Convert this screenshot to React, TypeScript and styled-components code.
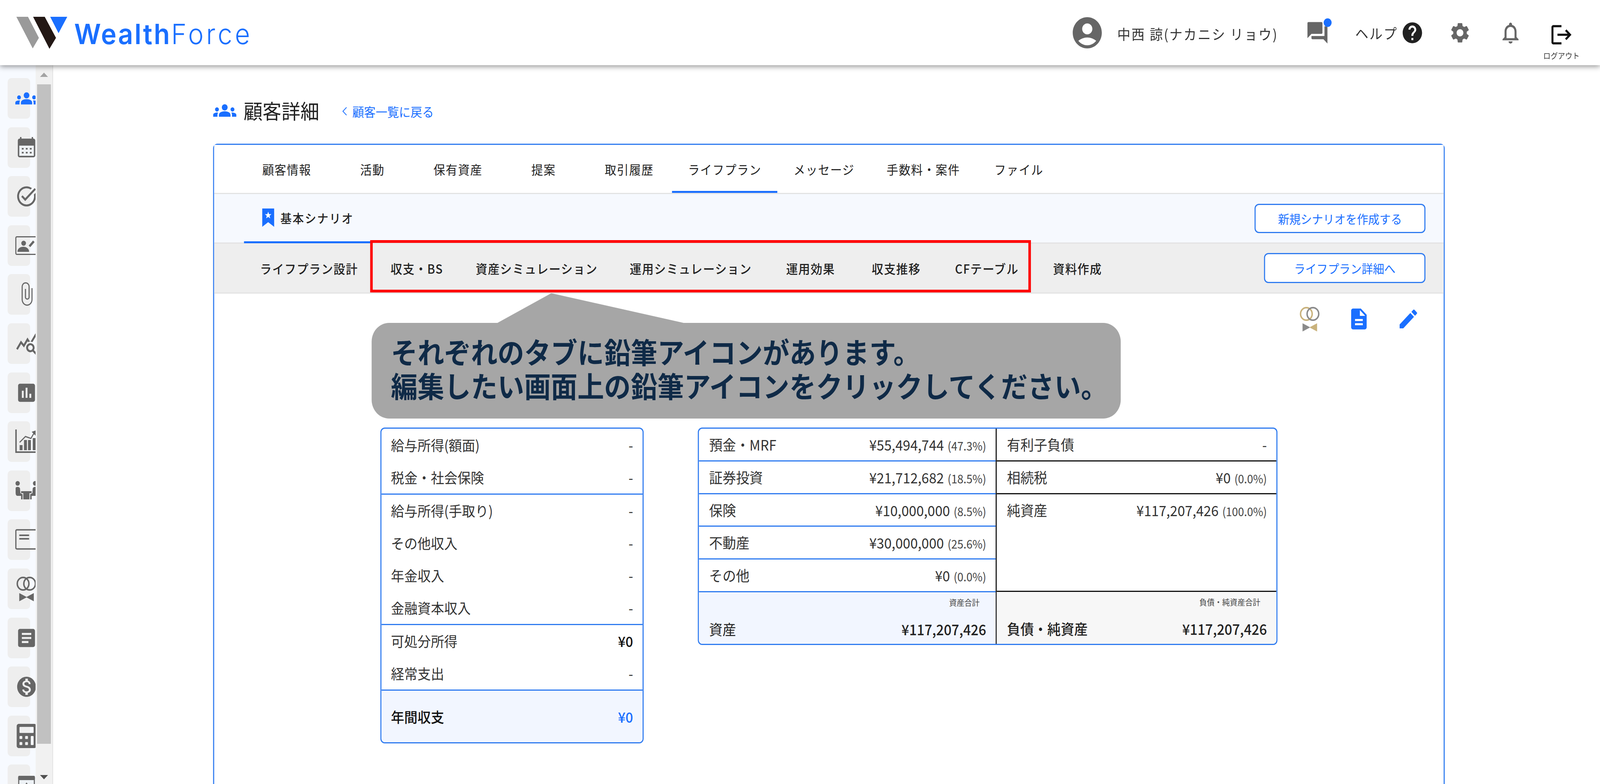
import React from 'react';
import styled, { createGlobalStyle } from 'styled-components';
import {
  MdAccountCircle,
  MdArticle,
  MdAssessment,
  MdDescription,
  MdEdit,
  MdGroups,
  MdHelp,
  MdLogout,
  MdMonetizationOn,
  MdNotificationsNone,
  MdOutlineTaskAlt,
  MdQueryStats,
  MdQuestionAnswer,
  MdSettings,
} from 'react-icons/md';
import { FaCalculator } from 'react-icons/fa';

const BLUE = '#1a6fff';
const LINE = '#2f7bf0';
const ICON = '#666666';
const DESIGN_WIDTH = 4400;

const GlobalStyle = createGlobalStyle`
  html, body {
    margin: 0;
    padding: 0;
    overflow: hidden;
    background: #fff;
  }
  body {
    font-family: "Noto Sans CJK JP", "Noto Sans", sans-serif;
    color: #222;
  }
`;

const Viewport = styled.div`
  width: 100vw;
  height: 2008px;
  overflow: hidden;
`;

const Page = styled.div`
  width: ${DESIGN_WIDTH}px;
  height: 2008px;
  overflow: hidden;
  transform-origin: 0 0;
  display: flex;
  flex-direction: column;
`;

/* header */
const Header = styled.header`
  position: relative;
  z-index: 2;
  flex: none;
  height: 167px;
  display: flex;
  align-items: center;
  padding: 0 56px 0 45px;
  background: #fff;
  box-shadow: 0 3px 14px rgba(0, 0, 0, 0.45);
`;

const Logo = styled.div`
  display: flex;
  align-items: center;
  gap: 18px;
`;

const LogoText = styled.span`
  font-family: Inter, sans-serif;
  font-size: 72px;
  line-height: 80px;
  color: ${BLUE};
  margin-top: 6px;

  b {
    font-weight: 600;
    letter-spacing: 3.8px;
  }
  i {
    font-style: normal;
    font-weight: 300;
    letter-spacing: 7px;
  }
`;

const HeaderRight = styled.div`
  margin-left: auto;
  display: flex;
  align-items: center;
  color: ${ICON};
`;

const UserName = styled.span`
  margin: 4px 0 0 35px;
  font-size: 36px;
  letter-spacing: 3px;
  white-space: pre;
  color: #333;
`;

const ChatButton = styled.div`
  position: relative;
  display: flex;
  margin-left: 75px;
`;

const ChatDot = styled.span`
  position: absolute;
  left: 50px;
  top: -4px;
  width: 22px;
  height: 22px;
  border-radius: 50%;
  background: ${BLUE};
`;

const HelpLink = styled.div`
  display: flex;
  align-items: center;
  gap: 8px;
  margin-left: 71px;
  font-size: 36px;
  letter-spacing: 3px;
  color: #333;
  svg {
    color: #212121;
  }
`;

const HeaderIcon = styled.div<{ $gap: number }>`
  display: flex;
  margin-left: ${(p) => p.$gap}px;
`;

const LogoutButton = styled.div`
  align-self: flex-start;
  margin: 43px 0 0 57px;
  display: flex;
  flex-direction: column;
  align-items: center;
  color: #111;
  font-size: 20px;
  line-height: 24px;
  span {
    margin-top: 9px;
    color: #333;
  }
`;

/* sidebar */
const Body = styled.div`
  flex: 1;
  min-height: 0;
  display: flex;
`;

const Sidebar = styled.nav`
  flex: none;
  width: 98px;
  overflow: hidden;
  padding: 33px 0 0 21px;
  box-sizing: border-box;
  background: #f7faff;
  display: flex;
  flex-direction: column;
  gap: 21.6px;
`;

const Tile = styled.div<{ $active?: boolean }>`
  flex: none;
  width: 62px;
  height: 104px;
  border-radius: 10px;
  background: #eeeeee;
  display: flex;
  align-items: center;
  padding-left: 21px;
  box-sizing: border-box;
  color: ${(p) => (p.$active ? BLUE : ICON)};
  svg {
    flex: none;
  }
`;

const ScrollTrack = styled.div`
  flex: none;
  width: 48px;
  box-sizing: border-box;
  padding: 0 4px;
  background: #f1f1f1;
  border-right: 2px solid #e2e2e2;
  display: flex;
  flex-direction: column;
  align-items: stretch;
`;

const ScrollArrow = styled.div<{ $down?: boolean }>`
  flex: none;
  height: ${(p) => (p.$down ? 103 : 49)}px;
  display: flex;
  align-items: ${(p) => (p.$down ? 'flex-end' : 'center')};
  justify-content: center;
  padding-bottom: ${(p) => (p.$down ? 12 : 0)}px;
  box-sizing: border-box;
  &::before {
    content: '';
    border-left: 11px solid transparent;
    border-right: 11px solid transparent;
    ${(p) =>
      p.$down
        ? 'border-top: 11px solid #505050;'
        : 'border-bottom: 11px solid #a3a3a3;'}
  }
`;

const ScrollThumb = styled.div`
  flex: 1;
  background: #c1c1c1;
`;

/* main */
const Main = styled.main`
  flex: 1;
  min-width: 0;
  padding: 80px 427px 0 440px;
  background: #fff;
`;

const TitleRow = styled.div`
  height: 72px;
  margin-bottom: 49px;
  display: flex;
  align-items: center;
`;

const TitleIcon = styled.span`
  display: flex;
  color: ${BLUE};
`;

const Title = styled.h1`
  margin: 0 0 0 20px;
  font-size: 52px;
  font-weight: 400;
  color: #222;
  line-height: 72px;
`;

const BackLink = styled.a`
  margin: 4px 0 0 62px;
  display: flex;
  align-items: center;
  gap: 14px;
  font-size: 32px;
  color: ${BLUE};
`;

const Card = styled.section`
  position: relative;
  min-height: 1700px;
  border: 3px solid ${LINE};
  border-radius: 12px;
  background: #fff;
`;

const TabRow = styled.div<{ $bg: string; $height: number }>`
  height: ${(p) => p.$height}px;
  box-sizing: border-box;
  display: flex;
  padding: 0 50px 0 82px;
  background: ${(p) => p.$bg};
  border-bottom: 3px solid #e3e3e3;
`;

const Tab = styled.div<{ $active?: boolean; $medium?: boolean }>`
  position: relative;
  min-width: 235.4px;
  padding: 0 44px;
  box-sizing: border-box;
  display: flex;
  align-items: center;
  justify-content: center;
  font-size: 32px;
  font-weight: ${(p) => (p.$medium ? 500 : 400)};
  letter-spacing: 1.7px;
  white-space: nowrap;
  color: #222;
  box-shadow: ${(p) => (p.$active ? `inset 0 -5px 0 ${BLUE}` : 'none')};
`;

const ScenarioTab = styled.div`
  width: 348px;
  padding-left: 50px;
  box-sizing: border-box;
  display: flex;
  align-items: center;
  gap: 17px;
  font-size: 31px;
  font-weight: 500;
  letter-spacing: 2.7px;
  border-bottom: 5px solid ${BLUE};
  margin-bottom: -2px;
`;

const RowAction = styled.div<{ $width: number; $height: number }>`
  margin: auto 0 auto auto;
  width: ${(p) => p.$width}px;
  height: ${(p) => p.$height}px;
  box-sizing: border-box;
  display: flex;
  align-items: center;
  justify-content: center;
  border: 3px solid ${LINE};
  border-radius: 12px;
  background: #fff;
  color: ${BLUE};
  font-size: 31px;
`;

const CardBody = styled.div`
  padding: 33px 65px 0 457px;
`;

const ToolRow = styled.div`
  height: 64px;
  margin-bottom: 246px;
  display: flex;
  justify-content: flex-end;
  gap: 72px;
  color: ${BLUE};
`;

const Tables = styled.div`
  display: flex;
  align-items: flex-start;
  gap: 149px;
`;

const IncomeTable = styled.div`
  width: 724px;
  box-sizing: border-box;
  border: 3px solid ${LINE};
  border-radius: 12px;
  overflow: hidden;
`;

const IncomeSection = styled.div`
  border-bottom: 3px solid ${LINE};
`;

const IncomeRow = styled.div`
  height: 82.75px;
  padding: 0 26px;
  box-sizing: border-box;
  display: flex;
  align-items: center;
  justify-content: space-between;
  font-size: 36.6px;
  color: #333;
`;

const IncomeValue = styled.span<{ $strong?: boolean }>`
  font-weight: ${(p) => (p.$strong ? 500 : 400)};
  color: ${(p) => (p.$strong ? '#111' : '#333')};
`;

const IncomeTotal = styled.div`
  height: 132px;
  padding: 0 26px;
  box-sizing: border-box;
  display: flex;
  align-items: center;
  justify-content: space-between;
  background: #f2f6ff;
  font-size: 36.6px;
  font-weight: 500;
  color: #111;

  span:last-child {
    color: ${BLUE};
  }
`;

const BalanceTable = styled.div`
  width: 1594px;
  box-sizing: border-box;
  border: 3px solid ${LINE};
  border-radius: 12px;
  overflow: hidden;
  display: grid;
  grid-template-columns: 819px 1fr;
`;

const BalanceColumn = styled.div<{ $line: string; $divider?: boolean }>`
  display: flex;
  flex-direction: column;
  height: 551px;
  ${(p) => (p.$divider ? 'border-right: 3px solid #111;' : '')}
  --row-line: ${(p) => p.$line};
`;

const BalanceRow = styled.div<{ $grow?: boolean }>`
  flex: ${(p) => (p.$grow ? 1 : 'none')};
  height: ${(p) => (p.$grow ? 'auto' : '83.75px')};
  box-sizing: border-box;
  padding: 17px 26px 0 28px;
  display: flex;
  justify-content: space-between;
  font-size: 37px;
  line-height: 46px;
  color: #333;
  border-bottom: 3px solid var(--row-line);
`;

const Percent = styled.small`
  margin-left: 10px;
  font-size: 30px;
  color: #444;
`;

const BalanceTotal = styled.div<{ $bg: string }>`
  flex: none;
  height: 133.5px;
  box-sizing: border-box;
  padding: 11px 26px 16px 28px;
  display: flex;
  flex-direction: column;
  justify-content: space-between;
  background: ${(p) => p.$bg};
`;

const TotalCaption = styled.div`
  align-self: flex-end;
  padding-right: 18px;
  font-size: 21px;
  line-height: 28px;
  color: #444;
`;

const TotalLine = styled.div<{ $strong?: boolean }>`
  display: flex;
  justify-content: space-between;
  font-size: 37px;
  line-height: 46px;
  color: #222;
  font-weight: ${(p) => (p.$strong ? 500 : 400)};

  span:last-child {
    font-weight: 500;
  }
`;

/* annotation drawn on top of the screenshot */
const RedFrame = styled.div`
  position: absolute;
  left: 429px;
  top: 244px;
  width: 1817px;
  height: 134px;
  box-sizing: border-box;
  border: 7px solid #ff0000;
`;

const Callout = styled.div`
  position: absolute;
  left: 433px;
  top: 456px;
  width: 2060px;
  height: 245px;
  box-sizing: border-box;
  padding: 29px 0 0 53px;
  border-radius: 48px;
  background: #a6a6a6;
  color: #0f2a47;
  font-size: 73.3px;
  font-weight: 700;
  line-height: 87px;
  white-space: pre;
`;

const CalloutTail = styled.div`
  position: absolute;
  left: 346px;
  top: -76px;
  width: 512px;
  height: 76px;
  background: #a6a6a6;
  clip-path: polygon(0 100%, 148px 0, 100% 100%);
`;

/* drawings */
const LogoMark = () => (
  <svg width="141" height="82" viewBox="0 0 141 82">
    <polygon points="0,0 32,0 62,54 45,81" fill="#9a9a9a" />
    <polygon points="46,0 78,0 109,54 91,82" fill="#231815" />
    <polygon points="93,0 140,0 116,42" fill={BLUE} />
  </svg>
);

const Bookmark = () => (
  <svg width="33" height="47" viewBox="0 0 33 47">
    <path d="M0 0H33V47L16.5 35L0 47Z" fill={BLUE} />
    <polygon
      points="16.5,8 18.8,14.4 25.5,14.6 20.2,18.7 22.1,25.2 16.5,21.4 10.9,25.2 12.8,18.7 7.5,14.6 14.2,14.4"
      fill="#fff"
    />
  </svg>
);

const Chevron = () => (
  <svg width="15" height="22" viewBox="0 0 15 22" fill="none" stroke={BLUE} strokeWidth="2">
    <path d="M13 1L3 11L13 21" />
  </svg>
);

const CalendarIcon = () => (
  <svg width="62" height="62" viewBox="0 0 62 62" fill={ICON}>
    <rect x="13" y="4" width="4" height="8" />
    <rect x="45" y="4" width="4" height="8" />
    <rect x="7" y="8" width="48" height="48" rx="5" />
    <rect x="11" y="26" width="40" height="26" fill="#eef2f6" />
    {[18, 29, 40].map((x) =>
      [32, 42].map((y) => <rect key={`${x}-${y}`} x={x} y={y} width="5" height="4" />),
    )}
  </svg>
);

const ProfileEditIcon = () => (
  <svg width="62" height="62" viewBox="0 0 62 62" fill={ICON}>
    <rect x="1.5" y="8.5" width="62" height="45" rx="3" fill="none" stroke={ICON} strokeWidth="3" />
    <circle cx="23" cy="25" r="6.5" />
    <path d="M6 47C6 38 14 34 22 34C30 34 38 38 38 47Z" />
    <path d="M39 33L51 20" stroke={ICON} strokeWidth="6" />
  </svg>
);

const ClipIcon = () => (
  <svg width="62" height="62" viewBox="0 0 62 62" fill="none" stroke={ICON} strokeWidth="3">
    <path d="M46 15V44A13.5 14.5 0 0 1 19 44V11A9.5 9.5 0 0 1 38 11V38A5 5 0 0 1 28 38V17" />
  </svg>
);

const GrowthIcon = () => (
  <svg width="62" height="62" viewBox="0 0 62 62" fill={ICON}>
    <path d="M2 -1V58H62" fill="none" stroke={ICON} strokeWidth="4" />
    {[
      [12, 40],
      [24, 27],
      [35, 27],
      [48, 22],
    ].map(([x, y]) => (
      <rect key={x} x={x} y={y} width="8" height={53 - y} />
    ))}
    <path d="M12 33L28 18L43 23L53 7" fill="none" stroke={ICON} strokeWidth="3" />
    <polygon points="45,6 58,2 56,16" />
  </svg>
);

const MeetingIcon = () => (
  <svg width="62" height="62" viewBox="0 0 62 62" fill={ICON}>
    <circle cx="6.5" cy="12" r="6" />
    <circle cx="54.5" cy="12" r="6" />
    <path d="M1 24C1 20 12 20 13 25L14 37L20 40V53H16V44H6C2 44 1 40 1 36Z" />
    <path d="M60 24C60 20 49 20 48 25L47 37L41 40V53H45V44H55C59 44 60 40 60 36Z" />
    <rect x="16" y="32" width="29" height="5" />
    <rect x="22" y="37" width="17" height="16" />
  </svg>
);

const NoteCardIcon = () => (
  <svg width="62" height="62" viewBox="0 0 62 62" fill={ICON}>
    <rect x="1.5" y="6" width="62" height="49" rx="3" fill="none" stroke={ICON} strokeWidth="3.5" />
    <rect x="11" y="18" width="27" height="4" />
    <rect x="11" y="27" width="27" height="4" />
  </svg>
);

const PresentIcon = () => (
  <svg width="62" height="62" viewBox="0 0 62 62" fill={ICON}>
    <rect x="9.5" y="10" width="43" height="44" rx="3" fill="#eef2f6" stroke={ICON} strokeWidth="3" />
    <rect x="8" y="8" width="46" height="11" rx="3" />
    <polygon points="31,25 37,33 25,33" />
  </svg>
);

const RingsIcon = ({ left = ICON, right = ICON }: { left?: string; right?: string }) => (
  <svg width="62" height="64" viewBox="0 0 62 64" fill="none" strokeWidth="4">
    <circle cx="21.5" cy="19" r="16" stroke={left} />
    <circle cx="39.5" cy="19" r="16" stroke={right} />
    <polygon points="11,43 31,53 31,54 11,64" fill={right} />
    <polygon points="51,43 31,53 31,54 51,64" fill={left} />
  </svg>
);

const sideIcons = [
  <MdGroups key="groups" size={62} />,
  <CalendarIcon key="calendar" />,
  <MdOutlineTaskAlt key="task" size={62} />,
  <ProfileEditIcon key="profile" />,
  <ClipIcon key="clip" />,
  <MdQueryStats key="stats" size={62} />,
  <MdAssessment key="assessment" size={62} />,
  <GrowthIcon key="growth" />,
  <MeetingIcon key="meeting" />,
  <NoteCardIcon key="note" />,
  <RingsIcon key="rings" />,
  <MdArticle key="article" size={62} />,
  <MdMonetizationOn key="money" size={62} />,
  <FaCalculator key="calc" size={62} />,
  <PresentIcon key="present" />,
];

const mainTabs = ['顧客情報', '活動', '保有資産', '提案', '取引履歴', 'ライフプラン', 'メッセージ', '手数料・案件', 'ファイル'];
const subTabs = ['ライフプラン設計', '収支・BS', '資産シミュレーション', '運用シミュレーション', '運用効果', '収支推移', 'CFテーブル', '資料作成'];

const incomeSections: [string, string][][] = [
  [
    ['給与所得(額面)', '-'],
    ['税金・社会保険', '-'],
  ],
  [
    ['給与所得(手取り)', '-'],
    ['その他収入', '-'],
    ['年金収入', '-'],
    ['金融資本収入', '-'],
  ],
  [
    ['可処分所得', '¥0'],
    ['経常支出', '-'],
  ],
];

const assets = [
  ['預金・MRF', '¥55,494,744', '(47.3%)'],
  ['証券投資', '¥21,712,682', '(18.5%)'],
  ['保険', '¥10,000,000', '(8.5%)'],
  ['不動産', '¥30,000,000', '(25.6%)'],
  ['その他', '¥0', '(0.0%)'],
];

export default function App() {
  // the browser window can be narrower than the 4400px design, so squeeze to fit
  const fit = window.innerWidth / DESIGN_WIDTH;

  return (
    <Viewport>
      <GlobalStyle />
      <Page style={{ transform: `scaleX(${fit})` }}>
        <Header>
          <Logo>
            <LogoMark />
            <LogoText>
              <b>Wealth</b>
              <i>Force</i>
            </LogoText>
          </Logo>
          <HeaderRight>
            <MdAccountCircle size={96} />
            <UserName>中西 諒(ナカニシ リョウ)</UserName>
            <ChatButton>
              <MdQuestionAnswer size={66} />
              <ChatDot />
            </ChatButton>
            <HelpLink>
              ヘルプ
              <MdHelp size={64} />
            </HelpLink>
            <HeaderIcon $gap={68}>
              <MdSettings size={62} />
            </HeaderIcon>
            <HeaderIcon $gap={75}>
              <MdNotificationsNone size={66} />
            </HeaderIcon>
            <LogoutButton>
              <MdLogout size={66} />
              <span>ログアウト</span>
            </LogoutButton>
          </HeaderRight>
        </Header>
        <Body>
          <Sidebar>
            {sideIcons.map((icon, i) => (
              <Tile key={i} $active={i === 0}>
                {icon}
              </Tile>
            ))}
          </Sidebar>
          <ScrollTrack>
            <ScrollArrow />
            <ScrollThumb />
            <ScrollArrow $down />
          </ScrollTrack>
          <Main>
            <TitleRow>
              <TitleIcon>
                <MdGroups size={64} />
              </TitleIcon>
              <Title>顧客詳細</Title>
              <BackLink>
                <Chevron />
                顧客一覧に戻る
              </BackLink>
            </TitleRow>
            <Card>
              <TabRow $bg="#fff" $height={126}>
                {mainTabs.map((t) => (
                  <Tab key={t} $active={t === 'ライフプラン'}>
                    {t}
                  </Tab>
                ))}
              </TabRow>
              <TabRow $bg="#f6f9fe" $height={127}>
                <ScenarioTab>
                  <Bookmark />
                  基本シナリオ
                </ScenarioTab>
                <RowAction $width={470} $height={75}>
                  新規シナリオを作成する
                </RowAction>
              </TabRow>
              <TabRow $bg="#eeeeee" $height={128}>
                {subTabs.map((t) => (
                  <Tab key={t} $medium>
                    {t}
                  </Tab>
                ))}
                <RowAction $width={444} $height={77}>
                  ライフプラン詳細へ
                </RowAction>
              </TabRow>
              <CardBody>
                <ToolRow>
                  <RingsIcon left="#c9b27c" right="#8a8a8a" />
                  <MdDescription size={64} />
                  <MdEdit size={64} />
                </ToolRow>
                <Tables>
                  <IncomeTable>
                    {incomeSections.map((rows, i) => (
                      <IncomeSection key={i}>
                        {rows.map(([label, value]) => (
                          <IncomeRow key={label}>
                            <span>{label}</span>
                            <IncomeValue $strong={value !== '-'}>{value}</IncomeValue>
                          </IncomeRow>
                        ))}
                      </IncomeSection>
                    ))}
                    <IncomeTotal>
                      <span>年間収支</span>
                      <span>¥0</span>
                    </IncomeTotal>
                  </IncomeTable>
                  <BalanceTable>
                    <BalanceColumn $line={LINE} $divider>
                      {assets.map(([label, value, pct]) => (
                        <BalanceRow key={label}>
                          <span>{label}</span>
                          <span>
                            {value}
                            <Percent>{pct}</Percent>
                          </span>
                        </BalanceRow>
                      ))}
                      <BalanceTotal $bg="#f2f6ff">
                        <TotalCaption>資産合計</TotalCaption>
                        <TotalLine>
                          <span>資産</span>
                          <span>¥117,207,426</span>
                        </TotalLine>
                      </BalanceTotal>
                    </BalanceColumn>
                    <BalanceColumn $line="#111">
                      <BalanceRow>
                        <span>有利子負債</span>
                        <span>-</span>
                      </BalanceRow>
                      <BalanceRow>
                        <span>相続税</span>
                        <span>
                          ¥0
                          <Percent>(0.0%)</Percent>
                        </span>
                      </BalanceRow>
                      <BalanceRow $grow>
                        <span>純資産</span>
                        <span>
                          ¥117,207,426
                          <Percent>(100.0%)</Percent>
                        </span>
                      </BalanceRow>
                      <BalanceTotal $bg="#f7f7f7">
                        <TotalCaption>負債・純資産合計</TotalCaption>
                        <TotalLine $strong>
                          <span>負債・純資産</span>
                          <span>¥117,207,426</span>
                        </TotalLine>
                      </BalanceTotal>
                    </BalanceColumn>
                  </BalanceTable>
                </Tables>
              </CardBody>
              <RedFrame />
              <Callout>
                <CalloutTail />
                {'それぞれのタブに鉛筆アイコンがあります。\n編集したい画面上の鉛筆アイコンをクリックしてください。'}
              </Callout>
            </Card>
          </Main>
        </Body>
      </Page>
    </Viewport>
  );
}
